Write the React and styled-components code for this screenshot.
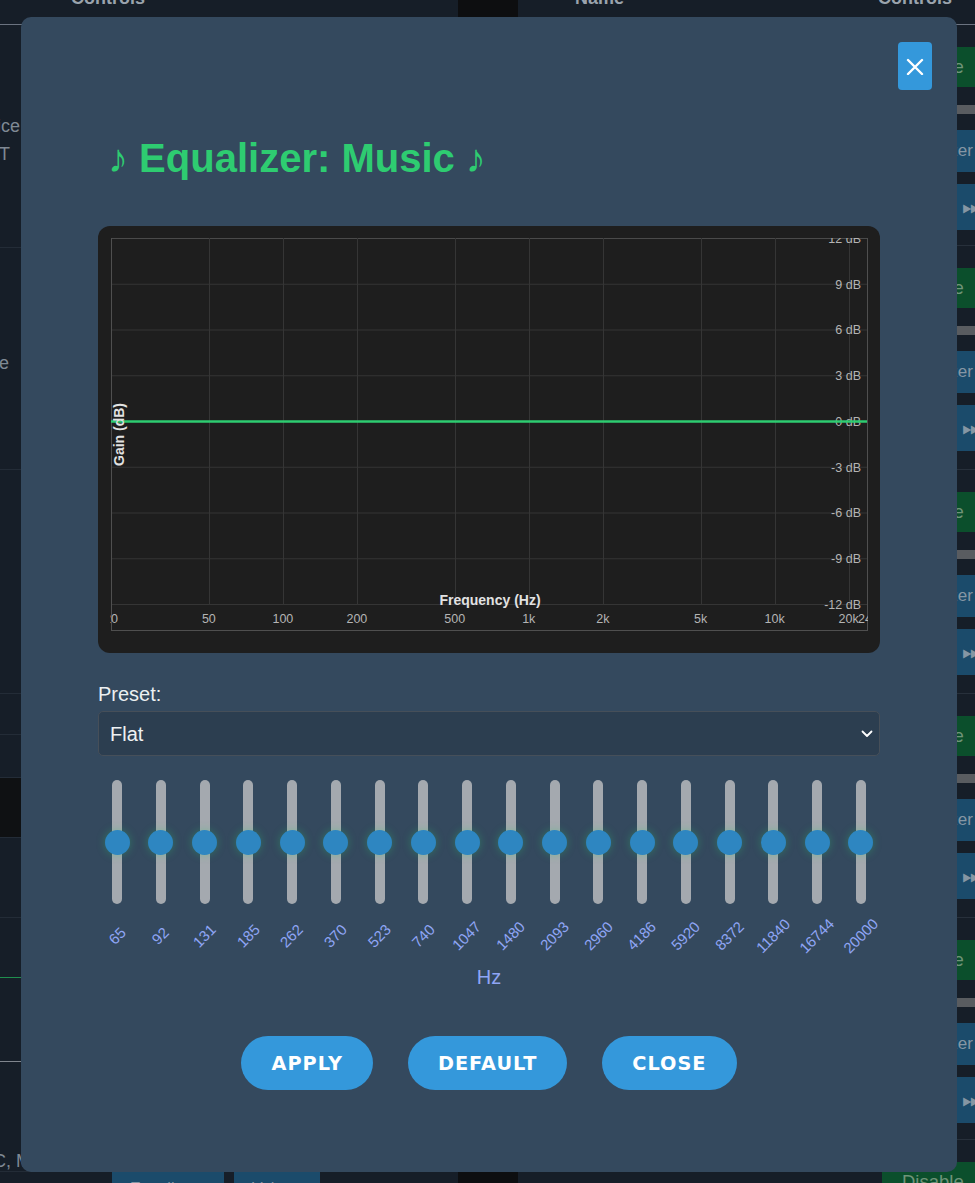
import React from 'react';
import styled, { createGlobalStyle } from 'styled-components';

const GlobalStyle = createGlobalStyle`
  html, body { margin: 0; padding: 0; background: #161e28; }
  body { font-family: "Liberation Sans", Arial, sans-serif; overflow: hidden; }
  * { box-sizing: border-box; }
`;

/* ---------- background page ---------- */
const Page = styled.div`
  display: flex;
  width: 975px;
  height: 1183px;
  overflow: hidden;
  background: #161e28;
  color: #8a939c;
`;

const LeftTable = styled.div`
  width: 458px;
  flex: none;
  display: flex;
  flex-direction: column;
`;

const Divider = styled.div`
  width: 60px;
  flex: none;
  background: #0d0e10;
`;

const RightTable = styled.div`
  flex: 1;
  display: flex;
  flex-direction: column;
  min-width: 0;
`;

const HeadRow = styled.div`
  height: 25px;
  flex: none;
  border-bottom: 1px solid #6b7380;
  display: flex;
  align-items: flex-start;
  font-weight: bold;
  font-size: 18px;
  color: #9aa3ad;
`;

const HeadCell = styled.span`
  margin-top: -13px;
  line-height: 22px;
  margin-left: ${p => p.$left}px;
  white-space: nowrap;
`;

const LeftRow = styled.div`
  height: ${p => p.$h}px;
  flex: none;
  display: flex;
  flex-direction: column;
  justify-content: ${p => p.$justify || 'center'};
  padding-top: ${p => p.$pt || 0}px;
  background: ${p => p.$bg || 'transparent'};
  border-bottom: 1px solid ${p => p.$line || '#232c37'};
  font-size: 18px;
  line-height: 28px;
`;

const StripText = styled.div`
  margin-left: ${p => p.$shift}px;
  white-space: nowrap;
  color: #7f8994;
  line-height: ${p => p.$lh || 28}px;
`;

const BottomButtons = styled.div`
  display: flex;
  gap: 10px;
  padding-left: 112px;
`;

const RightRow = styled.div`
  height: ${p => p.$h}px;
  flex: none;
  border-bottom: 1px solid #27303b;
  display: flex;
  justify-content: flex-end;
`;

const ControlsCol = styled.div`
  width: 93px;
  flex: none;
  padding-top: 22px;
  display: flex;
  flex-direction: column;
  overflow: visible;
`;

const BgButton = styled.div`
  width: 120px;
  height: ${p => p.$h}px;
  margin-bottom: ${p => p.$mb}px;
  background: ${p => p.$bg};
  color: ${p => p.$color || '#8596a4'};
  font-size: ${p => p.$fs || 17}px;
  line-height: ${p => p.$h}px;
  padding-left: ${p => p.$indent || 20}px;
  white-space: nowrap;
  border-radius: 3px;
`;

const GrayBar = styled.div`
  width: 120px;
  height: 9px;
  margin-bottom: 16px;
  background: #595c60;
`;

const SmallBlue = styled.div`
  width: ${p => p.$w}px;
  height: 30px;
  background: #1b4b6b;
  color: #8596a4;
  font-size: 16px;
  padding: 8px 0 0 18px;
`;

/* ---------- modal ---------- */
const Overlay = styled.div`
  position: fixed;
  inset: 0;
  padding: 17px 18px 11px 21px;
  display: flex;
`;

const Modal = styled.div`
  position: relative;
  flex: 1;
  background: #34495e;
  border-radius: 10px;
  padding: 117px 77px 0;
  display: flex;
  flex-direction: column;
`;

const CloseX = styled.button`
  position: absolute;
  top: 25px;
  right: 25px;
  width: 34px;
  height: 48px;
  border: none;
  border-radius: 4px;
  background: #3498db;
  padding: 0;
  display: flex;
  align-items: center;
  justify-content: center;
  cursor: pointer;
`;

const Title = styled.h2`
  margin: 0;
  padding-left: 10px;
  font-family: "Liberation Sans", Arial, sans-serif;
  font-weight: bold;
  font-size: 40px;
  line-height: 48px;
  color: #2ecc71;
  white-space: nowrap;
`;

const ChartBox = styled.div`
  margin-top: 44px;
  height: 427px;
  padding: 12px;
  background: #1e1e1e;
  border-radius: 12px;
`;

const ChartSvg = styled.svg`
  display: block;
  overflow: hidden;
  font-family: "Liberation Sans", Arial, sans-serif;
`;

const PresetLabel = styled.label`
  margin-top: 30px;
  display: block;
  font-size: 20px;
  line-height: 23px;
  color: #ecf0f1;
`;

const SelectWrap = styled.div`
  position: relative;
  margin-top: 5px;
`;

const Select = styled.select`
  width: 100%;
  height: 45px;
  appearance: none;
  -webkit-appearance: none;
  background: #2c3e50;
  color: #eef1f3;
  border: 1px solid #464f59;
  border-radius: 5px;
  padding: 0 11px;
  font-family: "Liberation Sans", Arial, sans-serif;
  font-size: 20px;
  outline: none;
`;

const Chevron = styled.svg`
  position: absolute;
  right: 7px;
  top: 19px;
  pointer-events: none;
`;

const Sliders = styled.div`
  margin-top: 24px;
  display: flex;
  justify-content: space-between;
`;

const Band = styled.div`
  width: 38px;
  display: flex;
  flex-direction: column;
  align-items: center;
`;

const Track = styled.div`
  position: relative;
  width: 10px;
  height: 124px;
  border-radius: 5px;
  background: #a4a9af;
`;

const Thumb = styled.div`
  position: absolute;
  left: 50%;
  width: 25px;
  height: 25px;
  margin-left: -12.5px;
  margin-top: -12.5px;
  border-radius: 50%;
  background: #2e86c1;
  box-shadow: 0 0 9px rgba(46, 204, 113, 0.35);
`;

const BandLabel = styled.div`
  margin-top: 22px;
  height: 20px;
  line-height: 20px;
  font-size: 15px;
  color: #8fa5f5;
  white-space: nowrap;
  transform: rotate(-45deg);
`;

const HzLabel = styled.div`
  margin-top: 20px;
  text-align: center;
  font-size: 20px;
  line-height: 23px;
  color: #8fa5f5;
`;

const ButtonRow = styled.div`
  margin-top: 47px;
  display: flex;
  justify-content: center;
  gap: 35px;
`;

const ActionButton = styled.button`
  height: 54px;
  padding: 0 30px;
  border: none;
  border-radius: 27px;
  background: #3498db;
  color: #ffffff;
  font-family: "DejaVu Sans", Verdana, sans-serif;
  font-weight: bold;
  font-size: 19.3px;
  letter-spacing: 1px;
  cursor: pointer;
`;

/* ---------- chart ---------- */
const W = 758;
const H = 403;
const DEC = 245.9;
const fx = f => 1 + DEC * Math.log10(f / 20);
const gy = i => 0.5 + i * 45.75;
const vFreqs = [50, 100, 200, 500, 1000, 2000, 5000, 10000, 20000];
const xLabels = [
  [20, '20'], [50, '50'], [100, '100'], [200, '200'], [500, '500'],
  [1000, '1k'], [2000, '2k'], [5000, '5k'], [10000, '10k'], [20000, '20k'], [24000, '24k'],
];
const dbs = [12, 9, 6, 3, 0, -3, -6, -9, -12];

function EqChart() {
  return (
    <ChartSvg width={W} height={H} viewBox={`0 0 ${W} ${H}`}>
      {dbs.map((d, i) => (
        <line key={'h' + d} x1={1} x2={W} y1={gy(i)} y2={gy(i)} stroke={i === 0 ? '#4a4a4a' : '#353535'} strokeWidth="1" />
      ))}
      {vFreqs.map(f => {
        const x = Math.round(fx(f)) + 0.5;
        return <line key={'v' + f} x1={x} x2={x} y1={0} y2={gy(8)} stroke="#353535" strokeWidth="1" />;
      })}
      <line x1={1.5} x2={1.5} y1={0} y2={392.5} stroke="#4f4f4f" strokeWidth="1" />
      <line x1={757.5} x2={757.5} y1={0} y2={392.5} stroke="#4f4f4f" strokeWidth="1" />
      <line x1={1} x2={W} y1={392.5} y2={392.5} stroke="#4f4f4f" strokeWidth="1" />
      {dbs.map((d, i) => (
        <text key={'t' + d} x={751} y={gy(i)} dy="4.3" textAnchor="end" fontSize="12.5" fill="#b4b4b4">
          {d} dB
        </text>
      ))}
      {xLabels.map(([f, l]) => (
        <text key={'x' + l} x={fx(f)} y={385} textAnchor="middle" fontSize="12.5" fill="#b4b4b4">
          {l}
        </text>
      ))}
      <line x1={1} x2={757} y1={183.5} y2={183.5} stroke="#2ecc71" strokeWidth="2.5" />
      <text x={380} y={367} textAnchor="middle" fontSize="14" fontWeight="bold" fill="#e2e2e2">
        Frequency (Hz)
      </text>
      <text x={0} y={0} transform="translate(14 196.5) rotate(-90)" textAnchor="middle" fontSize="14" fontWeight="bold" fill="#e2e2e2">
        Gain (dB)
      </text>
    </ChartSvg>
  );
}

const bands = [65, 92, 131, 185, 262, 370, 523, 740, 1047, 1480, 2093, 2960, 4186, 5920, 8372, 11840, 16744, 20000];
const gains = bands.map(() => 0);

const rightRows = [221, 224, 224, 224, 222, 120];

function Background() {
  return (
    <Page>
      <LeftTable>
        <HeadRow><HeadCell $left={71}>Controls</HeadCell></HeadRow>
        <LeftRow $h={223} $pt={7}>
          <StripText $shift={-35}>Device</StripText>
          <StripText $shift={-38}>REST</StripText>
        </LeftRow>
        <LeftRow $h={222} $pt={8}>
          <StripText $shift={-39}>Name</StripText>
        </LeftRow>
        <LeftRow $h={224} />
        <LeftRow $h={41} />
        <LeftRow $h={43} />
        <LeftRow $h={60} $bg="#0f1113" />
        <LeftRow $h={80} />
        <LeftRow $h={60} $line="#1f8e4e" />
        <LeftRow $h={84} $line="#80868e" />
        <LeftRow $h={110} $justify="flex-end">
          <StripText $shift={-31} $lh={20}>AAC, MP3</StripText>
        </LeftRow>
        <BottomButtons>
          <SmallBlue $w={112}>Equalizer</SmallBlue>
          <SmallBlue $w={86}>Volume</SmallBlue>
        </BottomButtons>
      </LeftTable>
      <Divider />
      <RightTable>
        <HeadRow>
          <HeadCell $left={57}>Name</HeadCell>
          <HeadCell $left={254}>Controls</HeadCell>
        </HeadRow>
        {rightRows.map((h, i) => (
          <RightRow key={i} $h={h}>
            <ControlsCol>
              <BgButton $h={40} $mb={18} $bg="#0b4f2c" $color="#6f9479" $fs={18.5}>Disable</BgButton>
              <GrayBar />
              <BgButton $h={42} $mb={12} $bg="#1b4b6b">Equalizer</BgButton>
              <BgButton $h={46} $mb={0} $bg="#1b4b6b" $indent={80} $fs={22}>⏭</BgButton>
            </ControlsCol>
          </RightRow>
        ))}
      </RightTable>
    </Page>
  );
}

export default function App() {
  return (
    <>
      <GlobalStyle />
      <Background />
      <Overlay>
        <Modal>
          <CloseX aria-label="Close">
            <svg width="18" height="18" viewBox="0 0 18 18">
              <path d="M2 3 L16 17 M16 3 L2 17" stroke="#ffffff" strokeWidth="2.4" strokeLinecap="round" />
            </svg>
          </CloseX>
          <Title>♪ Equalizer: Music ♪</Title>
          <ChartBox>
            <EqChart />
          </ChartBox>
          <PresetLabel htmlFor="preset">Preset:</PresetLabel>
          <SelectWrap>
            <Select id="preset" defaultValue="flat">
              <option value="flat">Flat</option>
              <option value="bass">Bass Boost</option>
              <option value="treble">Treble Boost</option>
              <option value="vocal">Vocal</option>
            </Select>
            <Chevron width="12" height="8" viewBox="0 0 12 8">
              <path d="M1.5 1.5 L6 6 L10.5 1.5" fill="none" stroke="#ffffff" strokeWidth="1.8" strokeLinecap="round" strokeLinejoin="round" />
            </Chevron>
          </SelectWrap>
          <Sliders>
            {bands.map((b, i) => (
              <Band key={b}>
                <Track>
                  <Thumb style={{ top: `${((12 - gains[i]) / 24) * 100}%` }} />
                </Track>
                <BandLabel>{b}</BandLabel>
              </Band>
            ))}
          </Sliders>
          <HzLabel>Hz</HzLabel>
          <ButtonRow>
            <ActionButton>APPLY</ActionButton>
            <ActionButton>DEFAULT</ActionButton>
            <ActionButton>CLOSE</ActionButton>
          </ButtonRow>
        </Modal>
      </Overlay>
    </>
  );
}
